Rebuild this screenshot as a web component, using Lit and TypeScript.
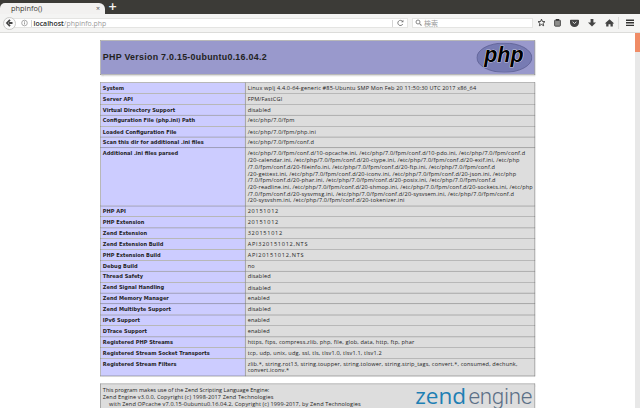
import { LitElement, html, css, svg } from "lit";
import { customElement } from "lit/decorators.js";

const P = "/etc/php/7.0/fpm/conf.d";
const rows: [string, string[]][] = [
  ["System", ["Linux wplj 4.4.0-64-generic #85-Ubuntu SMP Mon Feb 20 11:50:30 UTC 2017 x86_64"]],
  ["Server API", ["FPM/FastCGI"]],
  ["Virtual Directory Support", ["disabled"]],
  ["Configuration File (php.ini) Path", ["/etc/php/7.0/fpm"]],
  ["Loaded Configuration File", ["/etc/php/7.0/fpm/php.ini"]],
  ["Scan this dir for additional .ini files", [P]],
  ["Additional .ini files parsed", [
    `${P}/10-opcache.ini, ${P}/10-pdo.ini, ${P}`,
    `/20-calendar.ini, ${P}/20-ctype.ini, ${P}/20-exif.ini, /etc/php`,
    `/7.0/fpm/conf.d/20-fileinfo.ini, ${P}/20-ftp.ini, ${P}`,
    `/20-gettext.ini, ${P}/20-iconv.ini, ${P}/20-json.ini, /etc/php`,
    `/7.0/fpm/conf.d/20-phar.ini, ${P}/20-posix.ini, ${P}`,
    `/20-readline.ini, ${P}/20-shmop.ini, ${P}/20-sockets.ini, /etc/php`,
    `/7.0/fpm/conf.d/20-sysvmsg.ini, ${P}/20-sysvsem.ini, ${P}`,
    `/20-sysvshm.ini, ${P}/20-tokenizer.ini`,
  ]],
  ["PHP API", ["20151012"]],
  ["PHP Extension", ["20151012"]],
  ["Zend Extension", ["320151012"]],
  ["Zend Extension Build", ["API320151012,NTS"]],
  ["PHP Extension Build", ["API20151012,NTS"]],
  ["Debug Build", ["no"]],
  ["Thread Safety", ["disabled"]],
  ["Zend Signal Handling", ["disabled"]],
  ["Zend Memory Manager", ["enabled"]],
  ["Zend Multibyte Support", ["disabled"]],
  ["IPv6 Support", ["enabled"]],
  ["DTrace Support", ["enabled"]],
  ["Registered PHP Streams", ["https, ftps, compress.zlib, php, file, glob, data, http, ftp, phar"]],
  ["Registered Stream Socket Transports", ["tcp, udp, unix, udg, ssl, tls, tlsv1.0, tlsv1.1, tlsv1.2"]],
  ["Registered Stream Filters", ["zlib.*, string.rot13, string.toupper, string.tolower, string.strip_tags, convert.*, consumed, dechunk,", "convert.iconv.*"]],
];

const icon = (w: number, body: unknown) =>
  html`<svg class="ico" width=${w} height="12" viewBox="0 0 ${w} 12">${body}</svg>`;

@customElement("app-root")
export class AppRoot extends LitElement {
  static styles = css`
    :host { display: flex; flex-direction: column; width: 640px; height: 408px; overflow: hidden; background: #fff; font-family: "Open Sans", "Noto Sans", sans-serif; }
    .tabs { flex: none; height: 14px; background: #3c3b37; display: flex; align-items: flex-end; }
    .tab { width: 105px; height: 11.5px; background: #f2f1f0; border-radius: 5px 6px 0 0; display: flex; align-items: center; justify-content: space-between; padding: 0 5px 0 11px; box-sizing: border-box; font-size: 7.4px; color: #3c3b37; }
    .x { font-size: 7px; color: #555; }
    .plus { margin: 0 0 1px 3px; color: #f2f1f0; font: bold 11px/12px "DejaVu Sans", sans-serif; }
    .nav { flex: none; height: 19px; box-sizing: border-box; background: #f4f4f3; border-bottom: 1px solid #dcdcda; display: flex; align-items: center; padding-left: 3px; }
    .back { width: 13px; height: 13px; box-sizing: border-box; border: 1px solid #c9c9c7; border-radius: 50%; background: #fbfbfb; display: flex; align-items: center; justify-content: center; flex: none; z-index: 1; }
    .url { width: 397px; margin-left: -5px; height: 10.5px; background: #fff; border: .5px solid #e4e4e2; display: flex; align-items: center; box-sizing: border-box; padding-left: 9px; font-size: 6.95px; color: #9a9a9a; }
    .url b { color: #2b2b2b; font-weight: 600; }
    .sep { width: 1px; height: 7px; background: #d5d5d5; margin: 0 1.5px 0 3px; flex: none; }
    .spring { flex: 1; }
    .search { width: 121px; margin-left: 3.5px; height: 10.5px; background: #fff; border: .5px solid #e4e4e2; display: flex; align-items: center; padding-left: 2px; box-sizing: border-box; font: 7px "Noto Sans CJK JP", sans-serif; color: #999; gap: 2.5px; }
    .tools { display: grid; grid-template-columns: 15px 16px 18px 17px 18px 22px; justify-items: center; align-items: center; margin-left: 1.5px; }
    .ico { display: block; flex: none; }
    .menu { border-left: .5px solid #dcdcda; justify-self: stretch; display: flex; justify-content: center; }
    .body { flex: 1; min-height: 0; display: flex; }
    .view { flex: 1; min-width: 0; overflow: hidden; }
    .sb { width: 5px; flex: none; background: #e8e8e8; }
    .thumb { height: 19px; background: #f08c66; }
    .page { display: flow-root; width: 1363.5px; transform: scale(.4657); transform-origin: 0 0; color: #222; font-family: "Open Sans", sans-serif; }
    table { border-collapse: collapse; border: 0; width: 934px; margin: 16px auto 0; box-shadow: 1px 2px 3px #ccc; table-layout: fixed; }
    td { border: 1px solid #666; font-size: 12px; line-height: 14.41px; vertical-align: top; padding: 4px 5px; white-space: nowrap; overflow: hidden; }
    .e { background: #ccf; width: 300px; font-weight: bold; font-family: "DejaVu Sans", sans-serif; font-size: 10.9px; color: #222; padding: 4.9px 5px 3.1px; }
    .v { background: #ddd; letter-spacing: .33px; }
    .num { letter-spacing: 1.55px; }
    .line { display: block; }
    .h { background: #99c; font-weight: bold; height: 64px; padding: 4px 5px; }
    .hbox { display: flex; justify-content: space-between; align-items: center; height: 64px; }
    h1 { margin: 0; font: bold 19px "Liberation Sans", sans-serif; letter-spacing: .6px; color: #222; }
    .php { display: block; }
    .logo { font-family: "Liberation Sans", sans-serif; font-weight: bold; font-style: italic; font-size: 46px; }
    .foot { display: flex; justify-content: space-between; height: 60px; overflow: visible; }
    .zend { display: flex; align-items: baseline; margin-top: -14.5px; letter-spacing: 0; height: 66px; flex: none; overflow: visible; }
    .zend i { font: 400 48.5px/66px "Open Sans", sans-serif; color: #1d7fb4; }
    .zend u { text-decoration: none; font: 300 48px/66px Roboto, sans-serif; letter-spacing: -.5px; color: #5b6f86; margin-left: 5px; }
    .foot-t { white-space: pre; line-height: 15.3px; }
    .l1 { letter-spacing: 0; }
    .l2 { letter-spacing: .25px; }
    .l3 { letter-spacing: .25px; }
    .fv { height: 110px; vertical-align: top; overflow: visible; }
  `;
  render() {
    return html`
      <div class="tabs">
        <div class="tab"><span>phpinfo()</span><span class="x">×</span></div>
        <span class="plus">+</span>
      </div>
      <div class="nav">
        <div class="back">${icon(9, svg`<path d="M7.5 6H4M5 2.8L2 6l3 3.2" fill="none" stroke="#444" stroke-width="1.8"/>`)}</div>
        <div class="url">
          ${icon(7, svg`<circle cx="3.5" cy="6" r="2.8" fill="none" stroke="#888" stroke-width=".7"/><path d="M3.5 5.3v2.2M3.5 4v.7" stroke="#888" stroke-width=".8"/>`)}
          <span class="sep"></span><span><b>localhost</b>/phpinfo.php</span>
          <span class="spring"></span><span class="sep"></span>
          ${icon(13, svg`<path d="M8.6 4.5A2.6 2.6 0 1 0 8.8 7" fill="none" stroke="#777" stroke-width=".9"/><path d="M9.4 2.8v2.4H7z" fill="#777"/>`)}
        </div>
        <div class="search">
          ${icon(7, svg`<circle cx="3" cy="5" r="2" fill="none" stroke="#888"/><path d="M4.5 6.5L6.5 8.7" stroke="#888" stroke-width="1.1"/>`)}<span>検索</span>
        </div>
        <div class="tools">
          ${icon(9, svg`<path d="M4.5 2.2l.95 2.3 2.5.2-1.9 1.6.6 2.45-2.15-1.3-2.15 1.3.6-2.45L1.05 4.7l2.5-.2z" fill="none" stroke="#333" stroke-width=".9"/>`)}
          ${icon(9, svg`<rect x="1.6" y="3" width="5.8" height="6.2" rx=".8" fill="#8d8d8b" stroke="#333" stroke-width=".8"/><rect x="3" y="2" width="3" height="1.6" fill="#333"/>`)}
          ${icon(11, svg`<path d="M1.8 2.8h7.4a.8.8 0 0 1 .8.8v2a4.5 4.5 0 0 1-9 0v-2a.8.8 0 0 1 .8-.8z" fill="#444"/><path d="M3.6 4.8l1.9 1.7 1.9-1.7" fill="none" stroke="#eee" stroke-width=".9"/>`)}
          ${icon(10, svg`<path d="M3.6 2h2.8v3.6H9L5 9.6 1 5.6h2.6z" fill="#444"/>`)}
          ${icon(11, svg`<path d="M5.5 2.2L10.2 6.4H8.8v3.2H6.5V7.3h-2v2.3H2.2V6.4H.8z" fill="#444"/>`)}
          <div class="menu">${icon(10, svg`<path d="M1 3.2h8M1 5.8h8M1 8.4h8" stroke="#333" stroke-width="1.4"/>`)}</div>
        </div>
      </div>
      <div class="body">
        <div class="view">
          <div class="page">
            <table><tr><td class="h"><div class="hbox">
              <h1>PHP Version 7.0.15-0ubuntu0.16.04.2</h1>
              <svg class="php" width="120" height="64" viewBox="0 0 120 64">
                <ellipse cx="60" cy="32" rx="59" ry="31.5" fill="#777bb3" stroke="#56598c" stroke-width="1.5"/>
                <text class="logo" x="59" y="42" text-anchor="middle" fill="#000" stroke="#fff" stroke-width="1.6" paint-order="stroke">php</text>
              </svg>
            </div></td></tr></table>
            <table>
              ${rows.map(([k, v]) => html`<tr><td class="e">${k}</td><td class="v ${/^(API)?\d/.test(v[0]) ? "num" : ""}">${v.map((l) => html`<span class="line">${l}</span>`)}</td></tr>`)}
            </table>
            <table><tr><td class="v fv"><div class="foot">
              <div class="foot-t"><div class="l1">This program makes use of the Zend Scripting Language Engine:</div><div class="l2">Zend Engine v3.0.0, Copyright (c) 1998-2017 Zend Technologies</div><div class="l3">    with Zend OPcache v7.0.15-0ubuntu0.16.04.2, Copyright (c) 1999-2017, by Zend Technologies</div></div>
              <div class="zend"><i>zend</i><u>engine</u></div>
            </div></td></tr></table>
          </div>
        </div>
        <div class="sb"><div class="thumb"></div></div>
      </div>
    `;
  }
}
